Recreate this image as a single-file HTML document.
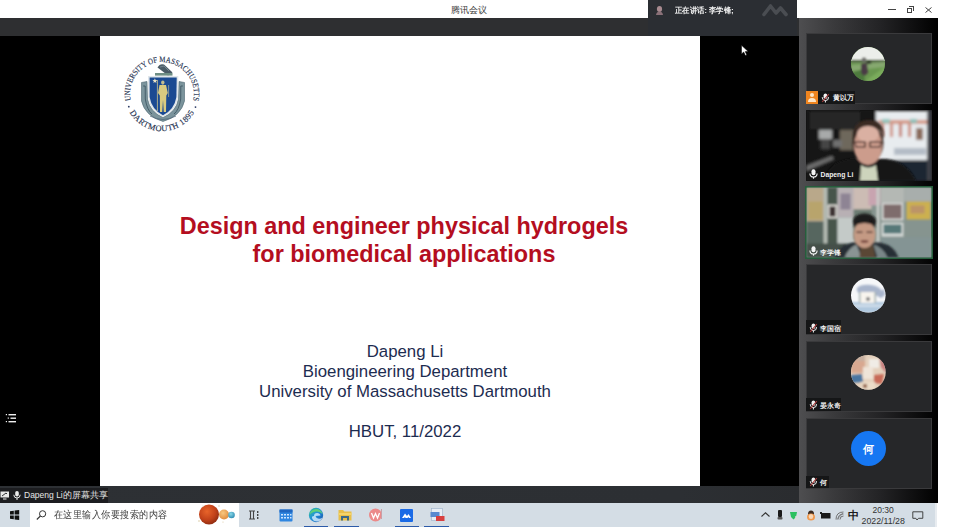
<!DOCTYPE html>
<html><head><meta charset="utf-8">
<style>
*{margin:0;padding:0;box-sizing:border-box}
html,body{width:968px;height:532px;overflow:hidden;background:#fff;font-family:"Liberation Sans",sans-serif;position:relative}
.a{position:absolute}
</style></head><body>
<!-- title bar -->
<div class="a" style="left:0;top:0;width:968px;height:18px;background:#fff"></div>
<div class="a" style="left:451px;top:5px;font-size:8.5px;color:#333;white-space:nowrap">腾讯会议</div>
<!-- window controls -->
<div class="a" style="left:888px;top:9px;width:8px;height:1px;background:#444"></div>
<div class="a" style="left:907px;top:8px;width:5px;height:5px;border:1px solid #444"></div>
<div class="a" style="left:909px;top:6px;width:5px;height:5px;border-top:1px solid #444;border-right:1px solid #444"></div>
<svg class="a" style="left:925px;top:7px" width="7" height="6"><path d="M0.5 0.5L6.5 5.5M6.5 0.5L0.5 5.5" stroke="#444" stroke-width="1"/></svg>

<!-- dark bar -->
<div class="a" style="left:0;top:18px;width:799px;height:18px;background:#2e2f31"></div>
<!-- main black -->
<div class="a" style="left:0;top:36px;width:799px;height:450px;background:#000"></div>
<!-- slide -->
<div class="a" style="left:100px;top:36px;width:600px;height:450px;background:#fff"></div>

<!-- seal -->
<svg class="a" style="left:0;top:0" width="968" height="532" viewBox="0 0 968 532">
<defs>
<path id="arcTop" d="M 135.9 112.3 A 31.9 31.9 0 1 1 188.1 112.3"/>
<path id="arcBot" d="M 125.3 100.5 A 37.3 37.3 0 0 0 198.7 100.5"/>
</defs>
<text font-family="Liberation Serif" font-size="8.2" fill="#25314f" stroke="#25314f" stroke-width="0.15"><textPath href="#arcTop" startOffset="50%" text-anchor="middle" textLength="113" lengthAdjust="spacingAndGlyphs">UNIVERSITY OF MASSACHUSETTS</textPath></text>
<text font-family="Liberation Serif" font-size="8.4" fill="#25314f" stroke="#25314f" stroke-width="0.15"><textPath href="#arcBot" startOffset="50%" text-anchor="middle" textLength="78" lengthAdjust="spacing">DARTMOUTH 1895</textPath></text>
<circle cx="128.8" cy="106.7" r="0.9" fill="#2a3a63"/>
<circle cx="195.5" cy="107.1" r="0.9" fill="#2a3a63"/>
<!-- ribbon -->
<path d="M141.5 82.5 L147 81.5 L147.5 99 Q150 112 163 117.5 Q176 112 178.5 99 L179 81.5 L184.5 82.5 L184.5 101 Q181 116 163 121.5 Q145 116 141.5 101 Z" fill="#7b949c" stroke="#4e6670" stroke-width="0.6"/>
<path d="M143.2 86 L145.2 86 L145.3 99 Q147 110 152 114 M182.8 86 L180.8 86 L180.7 99 Q179 110 174 114" stroke="#3f5864" stroke-width="0.9" fill="none"/>
<path d="M150 116 Q163 123 176 116" stroke="#50687a" stroke-width="0.8" fill="none"/>
<!-- crest -->
<path d="M157.5 67.5 Q160 63 164 64.5 L172.5 72.5 L168 75.5 Z" fill="#4a5b66"/>
<path d="M160 67 L164 66 L169 71" stroke="#7d8e98" stroke-width="0.8" fill="none"/>
<rect x="155" y="73" width="17.5" height="2.6" fill="#6e8e84"/>
<!-- shield -->
<path d="M148 76 L178.3 76 L178 97 Q176 111 163 117 Q150 111 148 97 Z" fill="#dfe6ea"/>
<path d="M149.6 77.4 L176.7 77.4 L176.4 97 Q174.4 109.5 163 115.3 Q151.6 109.5 149.6 97 Z" fill="#1b4a92"/>
<!-- star -->
<path d="M154.9 78.3 L155.6 80 L157.3 80.1 L156 81.2 L156.4 82.9 L154.9 82 L153.4 82.9 L153.8 81.2 L152.5 80.1 L154.2 80 Z" fill="#ece6c8"/>
<!-- figure -->
<ellipse cx="162.8" cy="82.6" rx="1.7" ry="2.1" fill="#c2bc8e"/>
<path d="M159.5 85 L166 85 L167.8 93 L166.3 95.5 L166 112 L163.8 112 L163 100 L162.2 112 L160 112 L159.8 95.5 L158 93 Z" fill="#d9ca80"/>
<line x1="157.4" y1="80" x2="157.4" y2="111" stroke="#cfc68e" stroke-width="0.8"/>
<line x1="168.6" y1="85" x2="168.6" y2="97" stroke="#cfc68e" stroke-width="0.6"/>
</svg>

<!-- slide text -->
<div class="a" style="left:100px;top:211.6px;width:608px;text-align:center;font-weight:bold;font-size:23.4px;line-height:28px;color:#b40e1f;white-space:nowrap">Design and engineer physical hydrogels<br>for biomedical applications</div>
<div class="a" style="left:100px;top:342.4px;width:610px;text-align:center;font-size:16.8px;line-height:20px;color:#1d2c50;white-space:nowrap">Dapeng Li<br>Bioengineering Department<br>University of Massachusetts Dartmouth<br><br>HBUT, 11/2022</div>

<!-- speaker tab -->
<div class="a" style="left:648px;top:0;width:149px;height:36px;background:#2b2e33"></div>
<div class="a" style="left:675px;top:5.5px;font-size:7.7px;line-height:9px;font-weight:bold;color:#f4f4f4;white-space:nowrap;transform:scaleX(0.925);transform-origin:0 50%">正在讲话:&nbsp;李学锋;</div>

<!-- right panel -->
<div class="a" style="left:799px;top:18px;width:138.6px;height:485px;background:linear-gradient(to right,#4e4e50 0%,#3a3a3c 25%,#222224 60%,#000 100%)"></div>
<div class="a" style="left:806px;top:33px;width:126px;height:71px;background:#262729;border:1px solid #3a3a3c"></div>
<div class="a" style="left:806px;top:264px;width:126px;height:71px;background:#262729;border:1px solid #3a3a3c"></div>
<div class="a" style="left:806px;top:341px;width:126px;height:71px;background:#262729;border:1px solid #3a3a3c"></div>
<div class="a" style="left:806px;top:418px;width:126px;height:71px;background:#262729;border:1px solid #3a3a3c"></div>
<svg class="a" style="left:851px;top:47px" width="34" height="34" viewBox="0 0 34 34"><defs><clipPath id="c1"><circle cx="17" cy="17" r="17"/></clipPath></defs><g clip-path="url(#c1)"><rect width="34" height="34" fill="#6a9850"/><rect width="34" height="14" fill="#eceeea"/><g filter="url(#bl2)"><rect y="13" width="34" height="2.5" fill="#5a6a50"/><path d="M0 18 L34 15 L34 20 L0 24Z" fill="#86a870"/><path d="M14 34 L34 20 L34 34Z" fill="#7aac5c"/><path d="M0 26 L12 22 L14 34 L0 34Z" fill="#4e7a3c"/><ellipse cx="13" cy="13" rx="2.2" ry="2.4" fill="#6a6a66"/><path d="M10 17 L16 16 L17 26 L13 29 L10 26Z" fill="#4a3a44"/><ellipse cx="18" cy="15.5" rx="2.5" ry="1.5" fill="#2a2a26"/></g></g></svg>
<svg class="a" style="left:851px;top:278px" width="35" height="35" viewBox="0 0 35 35"><defs><clipPath id="c4"><circle cx="17.3" cy="17.3" r="17.3"/></clipPath></defs><g clip-path="url(#c4)"><rect width="35" height="35" fill="#f6f7f9"/><g filter="url(#bl2)"><rect y="24" width="35" height="11" fill="#b0c8de"/><rect y="27" width="35" height="1.5" fill="#dfe8f0"/><path d="M6 10 Q10 6 20 7 Q28 8 31 13 L33 10 L34 17 L30 20 Q24 16 18 15 L8 15 Q5 13 6 10Z" fill="#a9b5cc"/><rect x="8" y="14" width="17" height="11" fill="#f8f4ee"/><rect x="8" y="14" width="1.4" height="11" fill="#9aa"/><rect x="23.5" y="14" width="1.4" height="11" fill="#9aa"/><circle cx="17" cy="21" r="2" fill="#777"/></g></g></svg>
<svg class="a" style="left:851px;top:355px" width="35" height="35" viewBox="0 0 35 35"><defs><clipPath id="c5"><circle cx="17.3" cy="17.4" r="17.4"/></clipPath></defs><g clip-path="url(#c5)"><rect width="35" height="35" fill="#e4d0bc"/><g filter="url(#bl)"><rect x="0" y="2" width="14" height="16" fill="#d8a890"/><rect x="6" y="0" width="8" height="6" fill="#c8b0a0"/><rect x="18" y="4" width="10" height="9" fill="#f0ece6"/><path d="M28 0 L35 0 L35 18 L30 12 Z" fill="#c88080"/><path d="M23 20 L33 19 L31 29 L23 28 Z" fill="#c86a58"/><path d="M0 20 L11 19 L12 27 L0 28 Z" fill="#4a74a0"/><rect x="12" y="12" width="10" height="12" fill="#efe4d8"/><rect x="10" y="27" width="14" height="8" fill="#ecdcc8"/><rect x="12" y="29" width="4" height="4" fill="#9a6a50"/></g></g></svg>
<div class="a" style="left:851px;top:431px;width:35px;height:35px;border-radius:50%;background:#1677f2"></div>
<div class="a" style="left:863px;top:442.5px;font-size:11px;line-height:13px;font-weight:bold;color:#fff">何</div>
<div class="a" style="left:806px;top:91px;width:12px;height:13px;background:#f0851f"></div>
<div class="a" style="left:810px;top:93px;width:4px;height:4px;border-radius:50%;background:#fde6c8"></div>
<div class="a" style="left:808px;top:98px;width:8px;height:4px;border-radius:4px 4px 0 0;background:#fde6c8"></div>
<div class="a" style="left:818px;top:91px;width:37px;height:13px;background:#151617"></div>
<svg class="a" style="left:821px;top:93px" width="9" height="10" viewBox="0 0 9 10"><rect x="2.6" y="0.5" width="3.6" height="5.6" rx="1.8" fill="#f2f2f2"/><path d="M1.2 4.2 Q1.2 7.6 4.4 7.6 Q7.6 7.6 7.6 4.2" stroke="#f2f2f2" stroke-width="1" fill="none"/><line x1="4.4" y1="7.6" x2="4.4" y2="9.5" stroke="#f2f2f2" stroke-width="1"/><line x1="1.2" y1="9" x2="7.8" y2="1.2" stroke="#a83c3c" stroke-width="1.1"/></svg>
<div class="a" style="left:833px;top:93px;font-size:6.6px;line-height:9px;font-weight:bold;color:#f2f2f2;white-space:nowrap">黄以万</div>
<div class="a" style="left:806px;top:320px;width:35px;height:14px;background:#151617"></div>
<svg class="a" style="left:809px;top:323px" width="9" height="10" viewBox="0 0 9 10"><rect x="2.6" y="0.5" width="3.6" height="5.6" rx="1.8" fill="#f2f2f2"/><path d="M1.2 4.2 Q1.2 7.6 4.4 7.6 Q7.6 7.6 7.6 4.2" stroke="#f2f2f2" stroke-width="1" fill="none"/><line x1="4.4" y1="7.6" x2="4.4" y2="9.5" stroke="#f2f2f2" stroke-width="1"/><line x1="1.2" y1="9" x2="7.8" y2="1.2" stroke="#a83c3c" stroke-width="1.1"/></svg>
<div class="a" style="left:820px;top:323.5px;font-size:6.6px;line-height:9px;font-weight:bold;color:#f2f2f2;white-space:nowrap">李国宿</div>
<div class="a" style="left:806px;top:398px;width:35px;height:13px;background:#151617"></div>
<svg class="a" style="left:809px;top:400px" width="9" height="10" viewBox="0 0 9 10"><rect x="2.6" y="0.5" width="3.6" height="5.6" rx="1.8" fill="#f2f2f2"/><path d="M1.2 4.2 Q1.2 7.6 4.4 7.6 Q7.6 7.6 7.6 4.2" stroke="#f2f2f2" stroke-width="1" fill="none"/><line x1="4.4" y1="7.6" x2="4.4" y2="9.5" stroke="#f2f2f2" stroke-width="1"/><line x1="1.2" y1="9" x2="7.8" y2="1.2" stroke="#a83c3c" stroke-width="1.1"/></svg>
<div class="a" style="left:820px;top:400.5px;font-size:6.6px;line-height:9px;font-weight:bold;color:#f2f2f2;white-space:nowrap">晏永奇</div>
<div class="a" style="left:806px;top:476px;width:23px;height:12px;background:#151617"></div>
<svg class="a" style="left:809px;top:477px" width="9" height="10" viewBox="0 0 9 10"><rect x="2.6" y="0.5" width="3.6" height="5.6" rx="1.8" fill="#f2f2f2"/><path d="M1.2 4.2 Q1.2 7.6 4.4 7.6 Q7.6 7.6 7.6 4.2" stroke="#f2f2f2" stroke-width="1" fill="none"/><line x1="4.4" y1="7.6" x2="4.4" y2="9.5" stroke="#f2f2f2" stroke-width="1"/><line x1="1.2" y1="9" x2="7.8" y2="1.2" stroke="#a83c3c" stroke-width="1.1"/></svg>
<div class="a" style="left:820px;top:477.5px;font-size:6.6px;line-height:9px;font-weight:bold;color:#f2f2f2;white-space:nowrap">何</div>
<!-- video tile 2 -->
<svg class="a" style="left:806px;top:110px" width="126" height="71" viewBox="0 0 126 71">
<defs><filter id="bl" x="-10%" y="-10%" width="120%" height="120%"><feGaussianBlur stdDeviation="1.3"/></filter>
<filter id="bl3" x="-10%" y="-10%" width="120%" height="120%"><feGaussianBlur stdDeviation="1.8"/></filter>
<filter id="bl2" x="-10%" y="-10%" width="120%" height="120%"><feGaussianBlur stdDeviation="0.9"/></filter></defs>
<rect width="126" height="71" fill="#131313"/>
<g filter="url(#bl3)">
<rect x="0" y="0" width="72" height="71" fill="#171717"/>
<rect x="4" y="2" width="50" height="17" fill="#252525"/>
<rect x="34" y="20" width="14" height="20" fill="#6e685c"/>
<rect x="13" y="20" width="13" height="9" fill="#a8aaaa"/>
<rect x="15" y="29" width="9" height="10" fill="#444"/>
<rect x="27" y="30" width="9" height="7" fill="#707070"/>
<path d="M0 56 L26 46 L28 49 L0 61 Z" fill="#707070"/>
<rect x="70" y="1" width="56" height="50" fill="#e8ecef"/>
<rect x="72" y="10" width="50" height="4" fill="#d49a88"/>
<rect x="76" y="9" width="8" height="4" fill="#8cc4bc"/>
<rect x="104" y="9" width="7" height="4" fill="#88c0b8"/>
<rect x="75" y="13" width="3" height="14" fill="#c8806e"/>
<rect x="84" y="13" width="3" height="14" fill="#d09080"/>
<rect x="93" y="13" width="3" height="14" fill="#c47a6a"/>
<rect x="102" y="13" width="3" height="14" fill="#cc8878"/>
<rect x="110" y="18" width="7" height="12" fill="#8a6a5a"/>
<rect x="88" y="38" width="32" height="7" fill="#b4bcc6"/>
<rect x="70" y="50" width="56" height="21" fill="#1f2833"/>
<rect x="121" y="0" width="5" height="71" fill="#3c4147"/>
</g>
<g filter="url(#bl2)">
<path d="M18 71 Q22 52 44 49 L80 49 Q102 52 110 71 Z" fill="#121212"/>
<ellipse cx="62" cy="33" rx="15.5" ry="20.5" fill="#3a2a24"/>
<ellipse cx="62" cy="36" rx="14" ry="19" fill="#cc9c8c"/>
<ellipse cx="62" cy="24" rx="11" ry="8" fill="#dab0a2"/>
<path d="M47 29 Q46 10 63 10 Q79 10 78 29 L76 22 Q71 15 63 15 Q53 15 49 22 Z" fill="#3a2a24"/>
<path d="M49 32 L59 32 L59 37 L50 37 Z M64 32 L75 32 L74 37 L64 37 Z" fill="none" stroke="#2a1a18" stroke-width="1.1"/>
<path d="M54 71 L55 55 Q62 60 70 55 L72 71 Z" fill="#cdd4bc"/>
</g>
</svg>
<!-- video tile 3 -->
<svg class="a" style="left:805px;top:186px" width="128" height="73" viewBox="0 0 128 73">
<rect width="128" height="73" fill="#265e3c"/>
<svg x="1.5" y="1.5" width="125" height="70" viewBox="0 0 125 70">
<rect width="125" height="70" fill="#86948f"/>
<g filter="url(#bl)">
<rect x="0" y="0" width="18" height="34" fill="#b9a88a"/>
<rect x="2" y="14" width="14" height="18" fill="#b8a46c"/>
<rect x="0" y="34" width="18" height="36" fill="#56665e"/>
<rect x="17" y="0" width="4" height="70" fill="#b4bab2"/>
<rect x="21" y="0" width="10" height="70" fill="#46554c"/>
<rect x="21" y="17" width="10" height="14" fill="#dcdad4"/>
<rect x="23" y="19" width="6" height="10" fill="#3a3030"/>
<rect x="31" y="0" width="17" height="30" fill="#b8b0b4"/>
<rect x="34" y="6" width="10" height="16" fill="#8e8494"/>
<rect x="31" y="30" width="17" height="26" fill="#c4cac8"/>
<rect x="47" y="0" width="18" height="22" fill="#ccbcb4"/>
<rect x="47" y="22" width="18" height="30" fill="#6c7c72"/>
<rect x="62" y="0" width="12" height="18" fill="#c8a4b0"/>
<rect x="70" y="0" width="3" height="70" fill="#c8ccc8"/>
<rect x="74" y="0" width="24" height="15" fill="#b4b8b4"/>
<rect x="75" y="15" width="22" height="18" fill="#d4d4d2"/>
<rect x="77" y="17" width="18" height="14" fill="#7e6c6c"/>
<rect x="75" y="35" width="22" height="14" fill="#d6dad8"/>
<rect x="77" y="37" width="18" height="9" fill="#567878"/>
<rect x="98" y="0" width="27" height="14" fill="#a8aeac"/>
<rect x="100" y="14" width="24" height="18" fill="#ccb050"/>
<rect x="104" y="18" width="14" height="8" fill="#bc9468"/>
<rect x="74" y="50" width="51" height="20" fill="#849494"/>
<rect x="0" y="56" width="40" height="14" fill="#44504a"/>
</g>
<g filter="url(#bl2)">
<path d="M28 70 Q32 58 46 55 L74 55 Q88 58 92 70 Z" fill="#262e34"/>
<path d="M38 70 Q42 60 50 57 L55 70 Z" fill="#8a9494"/>
<path d="M71 70 L67 57 Q77 60 81 70 Z" fill="#7a8688"/>
<path d="M53 70 L54 58 L67 58 L69 70 Z" fill="#5a4634"/>
<ellipse cx="58" cy="34" rx="11.5" ry="8" fill="#1c1a1a"/>
<ellipse cx="58" cy="47" rx="11" ry="13.5" fill="#c49a84"/>
<path d="M47 41 Q47 31 58 32 Q69 32 69 41 L66 37 Q58 34 50 37 Z" fill="#1c1a1a"/>
<rect x="50" y="44" width="6" height="1.4" fill="#4a3028"/>
<rect x="60" y="44" width="6" height="1.4" fill="#4a3028"/>
<ellipse cx="58" cy="54" rx="4" ry="1.4" fill="#7a4a40"/>
</g>
</svg>
</svg>
<svg class="a" style="left:809px;top:169px" width="9" height="10" viewBox="0 0 9 10"><rect x="2.5" y="0.3" width="4" height="6" rx="2" fill="#f4f4f4"/><path d="M0.9 4.4 Q0.9 8 4.5 8 Q8.1 8 8.1 4.4" stroke="#f4f4f4" stroke-width="1.1" fill="none"/><rect x="3.9" y="8" width="1.2" height="1.7" fill="#f4f4f4"/></svg>
<div class="a" style="left:820.5px;top:170px;font-size:6.8px;line-height:9px;font-weight:bold;color:#eee;white-space:nowrap">Dapeng Li</div>
<svg class="a" style="left:809px;top:246px" width="9" height="10" viewBox="0 0 9 10"><rect x="2.5" y="0.3" width="4" height="6" rx="2" fill="#f4f4f4"/><path d="M0.9 4.4 Q0.9 8 4.5 8 Q8.1 8 8.1 4.4" stroke="#f4f4f4" stroke-width="1.1" fill="none"/><rect x="3.9" y="8" width="1.2" height="1.7" fill="#f4f4f4"/></svg>
<div class="a" style="left:820px;top:247.5px;font-size:6.6px;line-height:9px;font-weight:bold;color:#f2f2f2;white-space:nowrap">李学锋</div>

<!-- bottom bar -->
<div class="a" style="left:0;top:486px;width:799px;height:17px;background:linear-gradient(to right,#2d3034 0%,#2c2f33 85%,#2a2c2f 100%)"></div>
<div class="a" style="left:0;top:488px;width:108px;height:15px;background:#1c1d20"></div>
<svg class="a" style="left:0;top:491px" width="10" height="9" viewBox="0 0 10 9"><rect x="0.5" y="0.5" width="8.5" height="6" fill="#e8e8e8"/><path d="M2 5 L6 2 L7 3" stroke="#1c1d20" stroke-width="0.9" fill="none"/><rect x="3" y="7.5" width="3.5" height="1" fill="#e8e8e8"/></svg>
<svg class="a" style="left:13px;top:491px" width="8" height="9" viewBox="0 0 8 9"><rect x="2.2" y="0" width="3.6" height="5.6" rx="1.8" fill="#ececec"/><path d="M0.8 3.8 Q0.8 7 4 7 Q7.2 7 7.2 3.8" stroke="#ececec" stroke-width="1" fill="none"/><rect x="3.5" y="7" width="1" height="2" fill="#ececec"/></svg>
<div class="a" style="left:24px;top:489.5px;font-size:8.5px;line-height:11px;color:#e6e6e6;white-space:nowrap">Dapeng Li的屏幕共享</div>

<!-- list icon -->
<svg class="a" style="left:5px;top:413px" width="12" height="10" viewBox="0 0 12 10"><g fill="#f0f0f0"><rect x="0.8" y="1" width="1.2" height="1.2"/><rect x="3.5" y="1" width="7.5" height="1.4"/><rect x="2.7" y="4.5" width="1.2" height="1.2"/><rect x="5.5" y="4.5" width="5.5" height="1.4"/><rect x="0.8" y="8" width="1.2" height="1.2"/><rect x="3.5" y="8" width="7.5" height="1.4"/></g></svg>
<!-- cursor -->
<svg class="a" style="left:740px;top:44px" width="10" height="13" viewBox="0 0 10 13"><path d="M1.5 1.3 L1.5 9.9 L3.7 8 L5.4 11.6 L6.8 11 L5.2 7.6 L8.2 7.5 Z" fill="#fff" stroke="#000" stroke-width="0.5"/></svg>

<!-- speaker tab icons -->
<svg class="a" style="left:655px;top:5px" width="9" height="10" viewBox="0 0 9 10"><ellipse cx="4.5" cy="4" rx="2.6" ry="3" fill="#a88a90"/><path d="M1 10 Q1.5 6.5 4.5 6.5 Q7.5 6.5 8 10 Z" fill="#8a7078"/></svg>
<svg class="a" style="left:761px;top:2px" width="28" height="15" viewBox="0 0 28 15"><path d="M3 12.5 L9.5 4 L15 11 L19.5 6 L25 12.5" stroke="#4a4d52" stroke-width="3.6" stroke-linejoin="round" stroke-linecap="round" fill="none"/></svg>

<!-- taskbar -->
<div class="a" style="left:0;top:503px;width:937px;height:24.3px;background:#d4dde5"></div>
<div class="a" style="left:935px;top:503px;width:2px;height:24.3px;background:#e8ecf0"></div>
<div class="a" style="left:30px;top:503px;width:209px;height:24.3px;background:#fff"></div>
<svg class="a" style="left:9px;top:510px" width="11" height="10" viewBox="0 0 11 10"><path d="M1 1.2 L4.8 0.7 L4.8 4.6 L1 4.6 Z M5.6 0.6 L10.2 0 L10.2 4.6 L5.6 4.6 Z M1 5.4 L4.8 5.4 L4.8 9.3 L1 8.8 Z M5.6 5.4 L10.2 5.4 L10.2 10 L5.6 9.4 Z" fill="#111"/></svg>
<svg class="a" style="left:36px;top:510px" width="11" height="10" viewBox="0 0 11 10"><circle cx="6.6" cy="3.8" r="3.1" fill="none" stroke="#333" stroke-width="1"/><line x1="4.4" y1="6" x2="0.8" y2="9.5" stroke="#333" stroke-width="1.1"/></svg>
<div class="a" style="left:53.5px;top:509px;font-size:10px;line-height:12px;color:#3a3a3a;white-space:nowrap;transform:scale(0.945,1.04);transform-origin:0 50%">在这里输入你要搜索的内容</div>
<!-- planets -->
<svg class="a" style="left:195px;top:503px" width="44" height="24" viewBox="0 0 44 24">
<defs><radialGradient id="p1" cx="40%" cy="35%" r="70%"><stop offset="0" stop-color="#e8642a"/><stop offset="0.6" stop-color="#c2421a"/><stop offset="1" stop-color="#8a2a10"/></radialGradient>
<radialGradient id="p2" cx="40%" cy="35%" r="70%"><stop offset="0" stop-color="#f8c880"/><stop offset="1" stop-color="#e08a3a"/></radialGradient>
<radialGradient id="p3" cx="40%" cy="35%" r="70%"><stop offset="0" stop-color="#8ad8e8"/><stop offset="1" stop-color="#2a88b0"/></radialGradient></defs>
<circle cx="29" cy="11.5" r="5" fill="url(#p2)"/>
<circle cx="36.5" cy="12" r="3.3" fill="url(#p3)"/>
<circle cx="14" cy="11.5" r="10" fill="url(#p1)"/>
<circle cx="4" cy="18" r="0.8" fill="#d8c8a0"/><circle cx="24" cy="3" r="0.7" fill="#d8c8a0"/><circle cx="28" cy="19" r="0.6" fill="#d8c8a0"/><circle cx="8" cy="3" r="0.6" fill="#d8c8a0"/>
</svg>
<!-- task view -->
<svg class="a" style="left:248px;top:510px" width="12" height="10" viewBox="0 0 12 10"><path d="M1 1 L7 1 M1 9 L7 9 M2.5 1 L2.5 9 M5.5 1 L5.5 9" stroke="#444" stroke-width="1.1" fill="none"/><rect x="9" y="1" width="1.4" height="2" fill="#444"/><rect x="9" y="4" width="1.4" height="2" fill="#444"/><rect x="9" y="7" width="1.4" height="2" fill="#444"/></svg>
<!-- calendar -->
<svg class="a" style="left:279px;top:508.5px" width="14" height="13" viewBox="0 0 14 13"><rect x="0.5" y="0.5" width="13" height="12" rx="1" fill="#2f86e0"/><rect x="0.5" y="0.5" width="13" height="3" fill="#1f66c0"/><g fill="#cfe6ff"><rect x="2" y="5" width="2" height="1.5"/><rect x="5" y="5" width="2" height="1.5"/><rect x="8" y="5" width="2" height="1.5"/><rect x="11" y="5" width="1.5" height="1.5"/><rect x="2" y="8" width="2" height="1.5"/><rect x="5" y="8" width="2" height="1.5"/><rect x="8" y="8" width="2" height="1.5"/><rect x="11" y="8" width="1.5" height="1.5"/></g></svg>
<!-- edge -->
<svg class="a" style="left:308px;top:507px" width="16" height="16" viewBox="0 0 16 16"><defs><linearGradient id="eg" x1="0" y1="0" x2="1" y2="1"><stop offset="0" stop-color="#35c1a0"/><stop offset="0.5" stop-color="#1f8fd8"/><stop offset="1" stop-color="#1a4fa8"/></linearGradient></defs><circle cx="8" cy="8" r="7.2" fill="url(#eg)"/><path d="M6 9 Q6 6 9 6 Q12 6 12.5 8.5 L7.5 9 Q8 11.5 11 11.8 Q13 11.8 14.5 10.5 Q13 14.5 9 14.5 Q5 14.5 4 11 Q3.5 9 6 9Z" fill="#d8f0ff" opacity="0.8"/><path d="M1.5 8 Q2 3 8 2 Q13 2 14.5 7 Q12 4 8 4.5 Q3 5 1.5 8Z" fill="#5ed07a"/></svg>
<div class="a" style="left:303.5px;top:525.5px;width:24px;height:1.6px;background:#2c5aa8"></div>
<!-- explorer -->
<svg class="a" style="left:338px;top:508.5px" width="14" height="12" viewBox="0 0 14 12"><path d="M0.5 1 L5 1 L6.5 2.5 L13.5 2.5 L13.5 11.5 L0.5 11.5 Z" fill="#e8bf4a"/><rect x="0.5" y="4" width="13" height="2" fill="#f4d46a"/><path d="M3 11.5 L3 7 L11 7 L11 11.5 L9 11.5 L9 9 L5 9 L5 11.5 Z" fill="#3c6a88"/></svg>
<div class="a" style="left:333.5px;top:525.5px;width:25px;height:1.6px;background:#2c5aa8"></div>
<!-- red app -->
<svg class="a" style="left:368px;top:507px" width="16" height="16" viewBox="0 0 16 16"><circle cx="7.5" cy="8" r="6.5" fill="#ec8a8a"/><path d="M3.5 6 L5.5 11 L7.5 6.5 L9.5 11 L11.5 6" stroke="#fff" stroke-width="1.3" fill="none"/><rect x="13" y="2" width="1" height="10" fill="#c8a0a8"/></svg>
<!-- tencent meeting -->
<svg class="a" style="left:399.5px;top:508.5px" width="13" height="13" viewBox="0 0 13 13"><rect x="0" y="0" width="13" height="13" rx="1" fill="#1a6ae6"/><path d="M2 9 L5 4.5 L7 7 L8.5 5 L11 9 L9 9 L8.5 8 L7.5 9 L5.5 9 L5 8 L4 9Z" fill="#fff"/></svg>
<div class="a" style="left:394.5px;top:525.5px;width:24px;height:1.6px;background:#2c5aa8"></div>
<!-- pdf app -->
<svg class="a" style="left:430px;top:507.5px" width="15" height="14" viewBox="0 0 15 14"><rect x="1.5" y="0.5" width="11" height="12" fill="#e8eef6" stroke="#9ab0c8" stroke-width="0.6"/><rect x="0.5" y="4" width="9" height="5" fill="#5a8ad0"/><rect x="6" y="8" width="8.5" height="5" fill="#d84040"/></svg>
<div class="a" style="left:424px;top:525.5px;width:25px;height:1.6px;background:#2c5aa8"></div>

<!-- tray -->
<svg class="a" style="left:761px;top:512px" width="9" height="5" viewBox="0 0 9 5"><path d="M0.5 4.5 L4.5 0.8 L8.5 4.5" stroke="#333" stroke-width="1.1" fill="none"/></svg>
<svg class="a" style="left:777px;top:509.5px" width="6" height="11" viewBox="0 0 6 11"><rect x="1" y="0" width="4" height="7" rx="1" fill="#1a1a1a"/><rect x="0.5" y="7" width="5" height="2.5" rx="1" fill="#555"/></svg>
<svg class="a" style="left:789px;top:511px" width="9" height="9" viewBox="0 0 9 9"><path d="M1 1 L8 1 L7 6 L4.5 8.5 L2 6 Z" fill="#2cc060"/><rect x="6" y="5" width="3" height="4" fill="#ddd" opacity="0.7"/></svg>
<svg class="a" style="left:805.5px;top:509.5px" width="10" height="11" viewBox="0 0 10 11"><ellipse cx="5" cy="4" rx="3" ry="3.5" fill="#3a2a20"/><ellipse cx="5" cy="7" rx="4" ry="3.5" fill="#f09a50"/><ellipse cx="5" cy="6.5" rx="2.2" ry="2.5" fill="#f8d8b8"/></svg>
<svg class="a" style="left:819.5px;top:511.5px" width="11" height="7" viewBox="0 0 11 7"><rect x="0" y="0" width="2" height="2" fill="#222"/><rect x="1" y="1" width="9.5" height="5.5" fill="#1a1a1a"/></svg>
<svg class="a" style="left:834.5px;top:510.5px" width="9" height="9" viewBox="0 0 9 9"><path d="M1 8.5 Q1 1 8.5 1 M3 8.5 Q3 3 8.5 3 M5 8.5 Q5 5 8.5 5" stroke="#666" stroke-width="0.9" fill="none"/><line x1="2" y1="8.5" x2="8" y2="2" stroke="#666" stroke-width="0.6"/></svg>
<div class="a" style="left:847.5px;top:508.5px;font-size:10.5px;line-height:12px;font-weight:bold;color:#1a1a1a;white-space:nowrap">中</div>
<div class="a" style="left:872.5px;top:505.5px;font-size:8.5px;line-height:9px;color:#333;white-space:nowrap">20:30</div>
<div class="a" style="left:861.5px;top:516.8px;font-size:8.8px;line-height:9px;color:#333;white-space:nowrap">2022/11/28</div>
<svg class="a" style="left:912px;top:510.5px" width="12" height="10" viewBox="0 0 12 10"><path d="M0.8 0.8 L10.8 0.8 L10.8 7.3 L6.5 7.3 L5 9 L3.8 7.3 L0.8 7.3 Z" fill="none" stroke="#333" stroke-width="0.9"/></svg>
</body></html>
